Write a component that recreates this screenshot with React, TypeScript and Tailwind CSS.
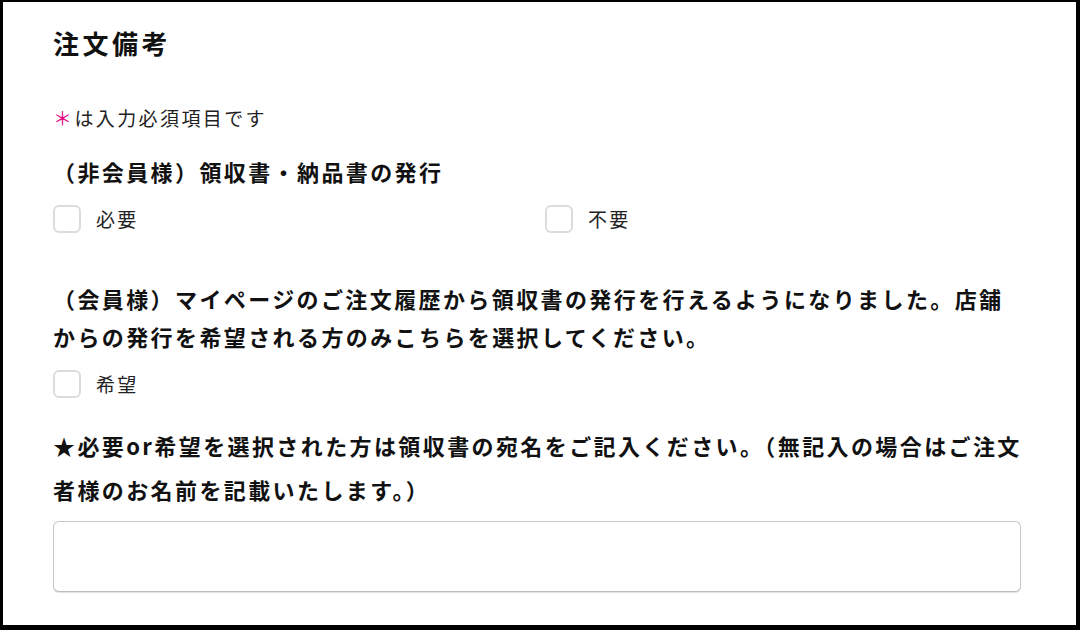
import React from 'react';

const Checkbox: React.FC<{ label: string }> = ({ label }) => (
  <label className="flex items-center gap-[15px] cursor-pointer">
    <span className="w-[28px] h-[28px] rounded-[6px] border-2 border-[#dcdcdc] bg-white shrink-0" />
    <span className="text-[19px] leading-[28px] tracking-[2.2px] text-[#222]">{label}</span>
  </label>
);

export default function App() {
  return (
    <div
      className="w-[1080px] h-[630px] bg-white border-black border-l-[3px] border-t-[2px] border-r-[4px] border-b-[5px] box-border overflow-hidden"
      style={{ fontFamily: '"Noto Sans CJK JP", "Noto Sans", sans-serif' }}
    >
      <div className="pl-[50px] pr-[55px] pt-[25px] flex flex-col">
        {/* Heading */}
        <h2 className="text-[26px] leading-[32px] font-bold tracking-[3.5px] text-[#111]">注文備考</h2>

        <p className="mt-[46px] text-[19px] leading-[26px] tracking-[2.4px] text-[#222]">
          <span className="text-[#e4007f]">＊</span>は入力必須項目です
        </p>

        {/* 非会員 */}
        <h3 className="mt-[26px] text-[22px] leading-[28px] font-bold tracking-[2.4px] text-[#111]">
          （非会員様）領収書・納品書の発行
        </h3>
        <div className="mt-[20px] grid grid-cols-2 gap-4">
          <Checkbox label="必要" />
          <Checkbox label="不要" />
        </div>

        {/* 会員 */}
        <h3 className="mt-[46px] text-[22px] leading-[38px] font-bold tracking-[2.4px] text-[#111] whitespace-nowrap">
          （会員様）マイページのご注文履歴から領収書の発行を行えるようになりました。店舗
          <br />
          からの発行を希望される方のみこちらを選択してください。
        </h3>
        <div className="mt-[15px]">
          <Checkbox label="希望" />
        </div>

        {/* 宛名 */}
        <h3 className="mt-[25px] text-[22px] leading-[44px] font-bold tracking-[2.4px] text-[#111] whitespace-nowrap">
          ★必要or希望を選択された方は領収書の宛名をご記入ください。（無記入の場合はご注文
          <br />
          者様のお名前を記載いたします。）
        </h3>
        <input
          type="text"
          className="mt-[10px] w-[968px] h-[71px] rounded-[6px] border border-[#c8c8c8] border-b-[#bdbdbd] shadow-[0_1px_0_#e2e2e2] bg-white outline-none px-3"
        />
      </div>
    </div>
  );
}
